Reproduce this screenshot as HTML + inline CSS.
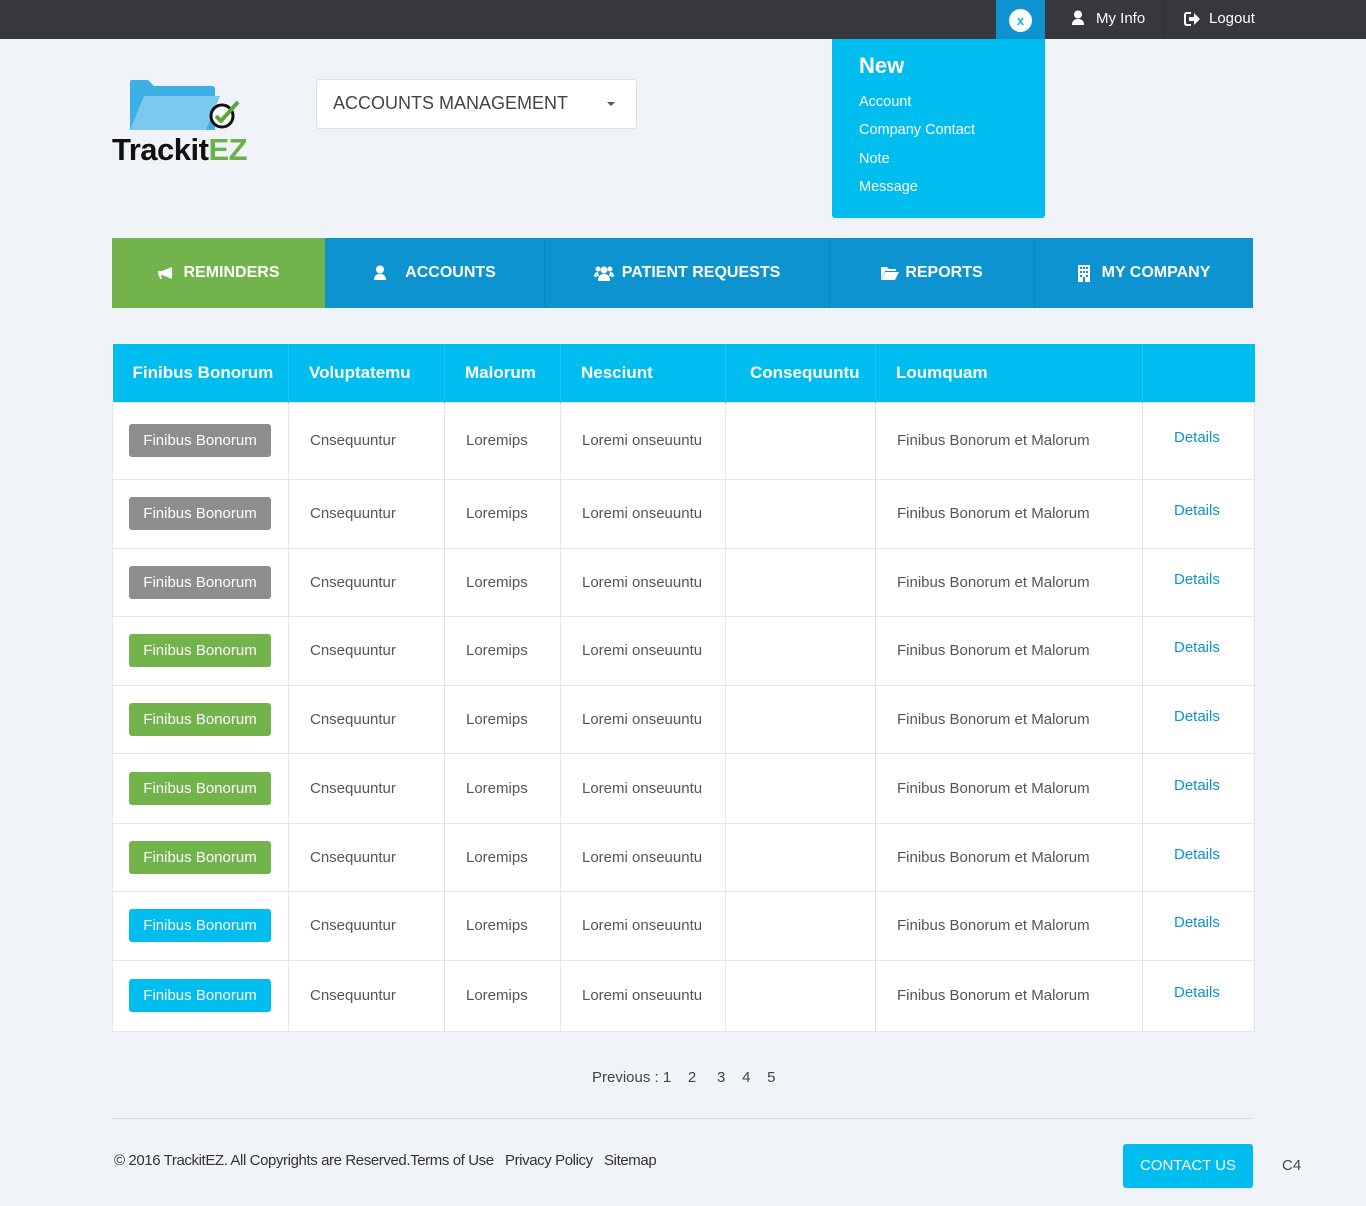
<!DOCTYPE html>
<html><head><meta charset="utf-8"><style>
*{box-sizing:border-box;margin:0;padding:0}
body{width:1366px;height:1206px;background:#f0f3f8;font-family:"Liberation Sans",sans-serif;color:#555;position:relative;overflow:hidden}
.top{position:absolute;left:0;top:0;width:1366px;height:39px;background:#37383d}
.abs{position:absolute}
.nav{position:absolute;top:238px;height:70px;background:#0c93d0;color:#fff;font-weight:bold;font-size:16px;display:flex;align-items:center;justify-content:center;border-right:1px solid #0a85bd}
table{position:absolute;left:112px;top:344px;border-collapse:collapse;width:1142px;background:#fff;table-layout:fixed}
th{background:#00bdf0;color:#fff;font-size:17px;text-align:left;height:58px;padding-left:20px;font-weight:bold;border-left:1px solid #19c6f4}
td{border:1px solid #e3e6ea;font-size:15px;color:#555;padding-left:21px}
.b{display:inline-block;width:142px;height:33px;line-height:33px;text-align:center;color:#fff;border-radius:3px;font-size:15px;margin-left:0}
.g{background:#8e8e8e}.gr{background:#72b34b}.c{background:#00bdf0}
.d{color:#0c93d0;padding-left:31px;padding-bottom:6px}
</style></head><body>
<div class="top"></div>
<div class="abs" style="left:996px;top:0;width:49px;height:39px;background:#0c93d0"></div>
<div class="abs" style="left:996px;top:39px;width:0;height:0;border-left:24.5px solid transparent;border-right:24.5px solid transparent;border-top:10px solid #0c93d0"></div>
<div class="abs" style="left:1009px;top:9px;width:23px;height:23px;border-radius:50%;background:#fff;color:#00bdf0;font-size:13px;font-weight:bold;text-align:center;line-height:23px">x</div>
<div class="abs" style="left:1163px;top:0;width:1px;height:39px;background:#2e2f33"></div>
<svg class="abs" style="left:1071px;top:10px" width="14" height="16" viewBox="0 0 14 16"><circle cx="7" cy="4.5" r="4" fill="#fff"/><path d="M1 15 Q1 9 7 9 Q13 9 13 15Z" fill="#fff"/></svg>
<div class="abs" style="left:1096px;top:10px;color:#fff;font-size:15px">My Info</div>
<svg class="abs" style="left:1184px;top:11px" width="17" height="16" viewBox="0 0 17 16"><path d="M7 2H3Q1 2 1 4V12Q1 14 3 14H7" stroke="#fff" stroke-width="2" fill="none"/><path d="M5 6H10V2L16 8L10 14V10H5Z" fill="#fff"/></svg>
<div class="abs" style="left:1209px;top:10px;color:#fff;font-size:15px">Logout</div>
<div class="abs" style="left:832px;top:39px;width:213px;height:179px;background:#00bdf0;border-radius:0 0 3px 3px"></div>
<div class="abs" style="left:859px;top:53px;color:#fff;font-size:22px;font-weight:bold">New</div>
<div class="abs" style="left:859px;top:88px;color:#fff;font-size:14.5px;line-height:28.3px">Account<br>Company Contact<br>Note<br>Message</div>
<!-- logo -->
<svg class="abs" style="left:126px;top:78px" width="118" height="56" viewBox="0 0 118 56"><path d="M4 4Q4 2 6 2H22L28 8H86Q89 8 89 11V52H4Z" fill="#3fb0e6"/><path d="M18 18H94L80 52H4Z" fill="#7cc9f0"/><circle cx="96" cy="38" r="11" fill="#fff" stroke="#111" stroke-width="3"/><path d="M90 38L95 43L112 24" stroke="#5aaa3a" stroke-width="4" fill="none"/></svg>
<div class="abs" style="left:112px;top:132px;font-size:31px;font-weight:bold;color:#111;letter-spacing:-0.5px">Trackit<span style="color:#6ab04c">EZ</span></div>
<div class="abs" style="left:316px;top:79px;width:321px;height:50px;background:#fff;border:1px solid #dde1e6;border-radius:3px"></div>
<div class="abs" style="left:333px;top:93px;font-size:18px;color:#444">ACCOUNTS MANAGEMENT</div>
<div class="abs" style="left:607px;top:102px;border-left:4px solid transparent;border-right:4px solid transparent;border-top:4px solid #555"></div>
<!-- nav -->
<div class="nav" style="left:112px;width:213px;background:#72b34b;border:none"><svg width="18" height="14" viewBox="0 0 18 14" style="margin-right:8px"><path d="M1 5H5L15 1V13L5 9H4L5 13H3L2 9H1Z" fill="#fff"/></svg>REMINDERS</div>
<div class="nav" style="left:325px;width:220px"><svg width="14" height="16" viewBox="0 0 14 16" style="margin-right:18px"><circle cx="7" cy="4.5" r="4" fill="#fff"/><path d="M1 15Q1 9 7 9Q13 9 13 15Z" fill="#fff"/></svg>ACCOUNTS</div>
<div class="nav" style="left:545px;width:285px"><svg width="20" height="16" viewBox="0 0 20 16" style="margin-right:8px"><circle cx="10" cy="5" r="3.5" fill="#fff"/><circle cx="4" cy="4" r="2.5" fill="#fff"/><circle cx="16" cy="4" r="2.5" fill="#fff"/><path d="M4 16Q4 9 10 9Q16 9 16 16Z" fill="#fff"/><path d="M0 12Q0 7 4 7L5 11Z M20 12Q20 7 16 7L15 11Z" fill="#fff"/></svg>PATIENT REQUESTS</div>
<div class="nav" style="left:830px;width:205px"><svg width="18" height="14" viewBox="0 0 18 14" style="margin-right:6px"><path d="M0 1H6L8 3H15V5H4L0 13Z M4 6H18L14 14H0Z" fill="#fff"/></svg>REPORTS</div>
<div class="nav" style="left:1035px;width:218px;border:none"><svg width="12" height="17" viewBox="0 0 12 17" style="margin-right:12px"><rect x="0" y="0" width="12" height="17" fill="#fff"/><g fill="#0c93d0"><rect x="2" y="2" width="2" height="2"/><rect x="5" y="2" width="2" height="2"/><rect x="8" y="2" width="2" height="2"/><rect x="2" y="6" width="2" height="2"/><rect x="5" y="6" width="2" height="2"/><rect x="8" y="6" width="2" height="2"/><rect x="2" y="10" width="2" height="2"/><rect x="8" y="10" width="2" height="2"/><rect x="5" y="12" width="2" height="5"/></g></svg>MY COMPANY</div>
<table>
<colgroup><col style="width:176px"><col style="width:156px"><col style="width:116px"><col style="width:165px"><col style="width:150px"><col style="width:267px"><col style="width:112px"></colgroup>
<tr><th style="border-left:none">Finibus Bonorum</th><th>Voluptatemu</th><th>Malorum</th><th>Nesciunt</th><th style="padding-left:24px">Consequuntu</th><th>Loumquam</th><th></th></tr>
<tr style="height:77px"><td style="padding-left:16px"><span class="b g">Finibus Bonorum</span></td><td>Cnsequuntur</td><td>Loremips</td><td>Loremi onseuuntu</td><td></td><td>Finibus Bonorum et Malorum</td><td class="d">Details</td></tr>
<tr style="height:69px"><td style="padding-left:16px"><span class="b g">Finibus Bonorum</span></td><td>Cnsequuntur</td><td>Loremips</td><td>Loremi onseuuntu</td><td></td><td>Finibus Bonorum et Malorum</td><td class="d">Details</td></tr>
<tr style="height:68px"><td style="padding-left:16px"><span class="b g">Finibus Bonorum</span></td><td>Cnsequuntur</td><td>Loremips</td><td>Loremi onseuuntu</td><td></td><td>Finibus Bonorum et Malorum</td><td class="d">Details</td></tr>
<tr style="height:69px"><td style="padding-left:16px"><span class="b gr">Finibus Bonorum</span></td><td>Cnsequuntur</td><td>Loremips</td><td>Loremi onseuuntu</td><td></td><td>Finibus Bonorum et Malorum</td><td class="d">Details</td></tr>
<tr style="height:68px"><td style="padding-left:16px"><span class="b gr">Finibus Bonorum</span></td><td>Cnsequuntur</td><td>Loremips</td><td>Loremi onseuuntu</td><td></td><td>Finibus Bonorum et Malorum</td><td class="d">Details</td></tr>
<tr style="height:70px"><td style="padding-left:16px"><span class="b gr">Finibus Bonorum</span></td><td>Cnsequuntur</td><td>Loremips</td><td>Loremi onseuuntu</td><td></td><td>Finibus Bonorum et Malorum</td><td class="d">Details</td></tr>
<tr style="height:68px"><td style="padding-left:16px"><span class="b gr">Finibus Bonorum</span></td><td>Cnsequuntur</td><td>Loremips</td><td>Loremi onseuuntu</td><td></td><td>Finibus Bonorum et Malorum</td><td class="d">Details</td></tr>
<tr style="height:69px"><td style="padding-left:16px"><span class="b c">Finibus Bonorum</span></td><td>Cnsequuntur</td><td>Loremips</td><td>Loremi onseuuntu</td><td></td><td>Finibus Bonorum et Malorum</td><td class="d">Details</td></tr>
<tr style="height:71px"><td style="padding-left:16px"><span class="b c">Finibus Bonorum</span></td><td>Cnsequuntur</td><td>Loremips</td><td>Loremi onseuuntu</td><td></td><td>Finibus Bonorum et Malorum</td><td class="d">Details</td></tr>
</table>
<div class="abs" style="left:592px;top:1069px;font-size:15px;color:#444">Previous : 1 &nbsp;&nbsp; 2 &nbsp;&nbsp;&nbsp; 3 &nbsp;&nbsp; 4 &nbsp;&nbsp; 5</div>
<div class="abs" style="left:112px;top:1118px;width:1142px;height:1px;background:#d8dce2"></div>
<div class="abs" style="left:114px;top:1152px;font-size:15px;color:#333;letter-spacing:-0.4px">© 2016 TrackitEZ. All Copyrights are Reserved.Terms of Use &nbsp;&nbsp;Privacy Policy &nbsp;&nbsp;Sitemap</div>
<div class="abs" style="left:1123px;top:1144px;width:130px;height:44px;background:#00bdf0;border-radius:3px;color:#fff;font-size:15px;text-align:center;line-height:44px">CONTACT US</div>
<div class="abs" style="left:1282px;top:1157px;font-size:15px;color:#444">C4</div>
</body></html>
